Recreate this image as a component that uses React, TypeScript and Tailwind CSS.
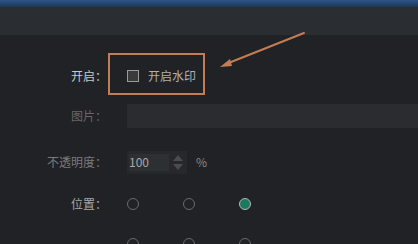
import React from 'react';

const font = { fontFamily: '"Noto Sans CJK SC", "Noto Sans", sans-serif' };

const Radio: React.FC<{ checked?: boolean }> = ({ checked }) => (
  <span
    className={`block w-[12px] h-[12px] rounded-full border ${
      checked ? 'bg-[#1b7a5e] border-[#b5b5b5]' : 'bg-transparent border-[#6a6a6a]'
    }`}
  />
);

const Row: React.FC<{ label?: string; labelClass?: string; h: string; children?: React.ReactNode }> = ({
  label,
  labelClass = 'text-[#c8c8c8]',
  h,
  children,
}) => (
  <div className={`flex items-center ${h}`}>
    <div className={`w-[107px] shrink-0 text-right text-[12px] leading-none ${labelClass}`}>{label}</div>
    <div className="flex flex-1 items-center pl-[20px]">{children}</div>
  </div>
);

export default function App() {
  return (
    <div className="relative w-[418px] h-[244px] overflow-hidden bg-[#212226]" style={font}>
      <div className="h-[7px] bg-gradient-to-b from-[#2f5688] to-[#1d3657]" />
      <div className="h-[28px] bg-[#2a2d31]" />

      <div className="pt-[21px]">
        <Row label="开启：" h="h-[40px]">
          <span className="block w-[12px] h-[12px] border border-[#9a9a9a] bg-[#3a3a3a]" />
          <span className="ml-[9px] text-[12px] leading-none text-[#b0b0b0]">开启水印</span>
        </Row>

        <Row label="图片：" labelClass="text-[#676767]" h="h-[40px]">
          <div className="h-[24px] flex-1 bg-[#2a2c2f]" />
        </Row>

        <Row label="不透明度：" labelClass="text-[#7a7a7a]" h="h-[52px]">
          <div className="flex h-[23px] w-[60px] items-center bg-[#26282b] pl-[2px]">
            <div className="flex h-[17px] w-[40px] items-center bg-[#2d3033] text-[12px] leading-none text-[#a8a8a8]">
              100
            </div>
            <div className="ml-[4px] flex flex-col items-center gap-[3px]">
              <span className="block h-0 w-0 border-x-[5px] border-b-[6px] border-x-transparent border-b-[#4a4c4f]" />
              <span className="block h-0 w-0 border-x-[5px] border-t-[6px] border-x-transparent border-t-[#4a4c4f]" />
            </div>
          </div>
          <span className="ml-[9px] text-[12px] leading-none text-[#8a8a8a]">%</span>
        </Row>

        <Row label="位置：" labelClass="text-[#a8a8a8]" h="h-[32px]">
          <div className="flex gap-[44px]">
            <Radio />
            <Radio />
            <Radio checked />
          </div>
        </Row>

        <Row h="h-[48px]">
          <div className="flex gap-[44px]">
            <Radio />
            <Radio />
            <Radio />
          </div>
        </Row>
      </div>

      {/* annotation overlay */}
      <div className="absolute left-[108px] top-[53px] h-[42px] w-[97px] border-2 border-[#c27d56]" />
      <svg className="absolute left-0 top-0" width="418" height="244">
        <line x1="304" y1="33" x2="226" y2="64" stroke="#c27d56" strokeWidth="2" strokeLinecap="round" />
        <polygon points="220,67 230,59 232,66" fill="#c27d56" />
      </svg>
    </div>
  );
}
